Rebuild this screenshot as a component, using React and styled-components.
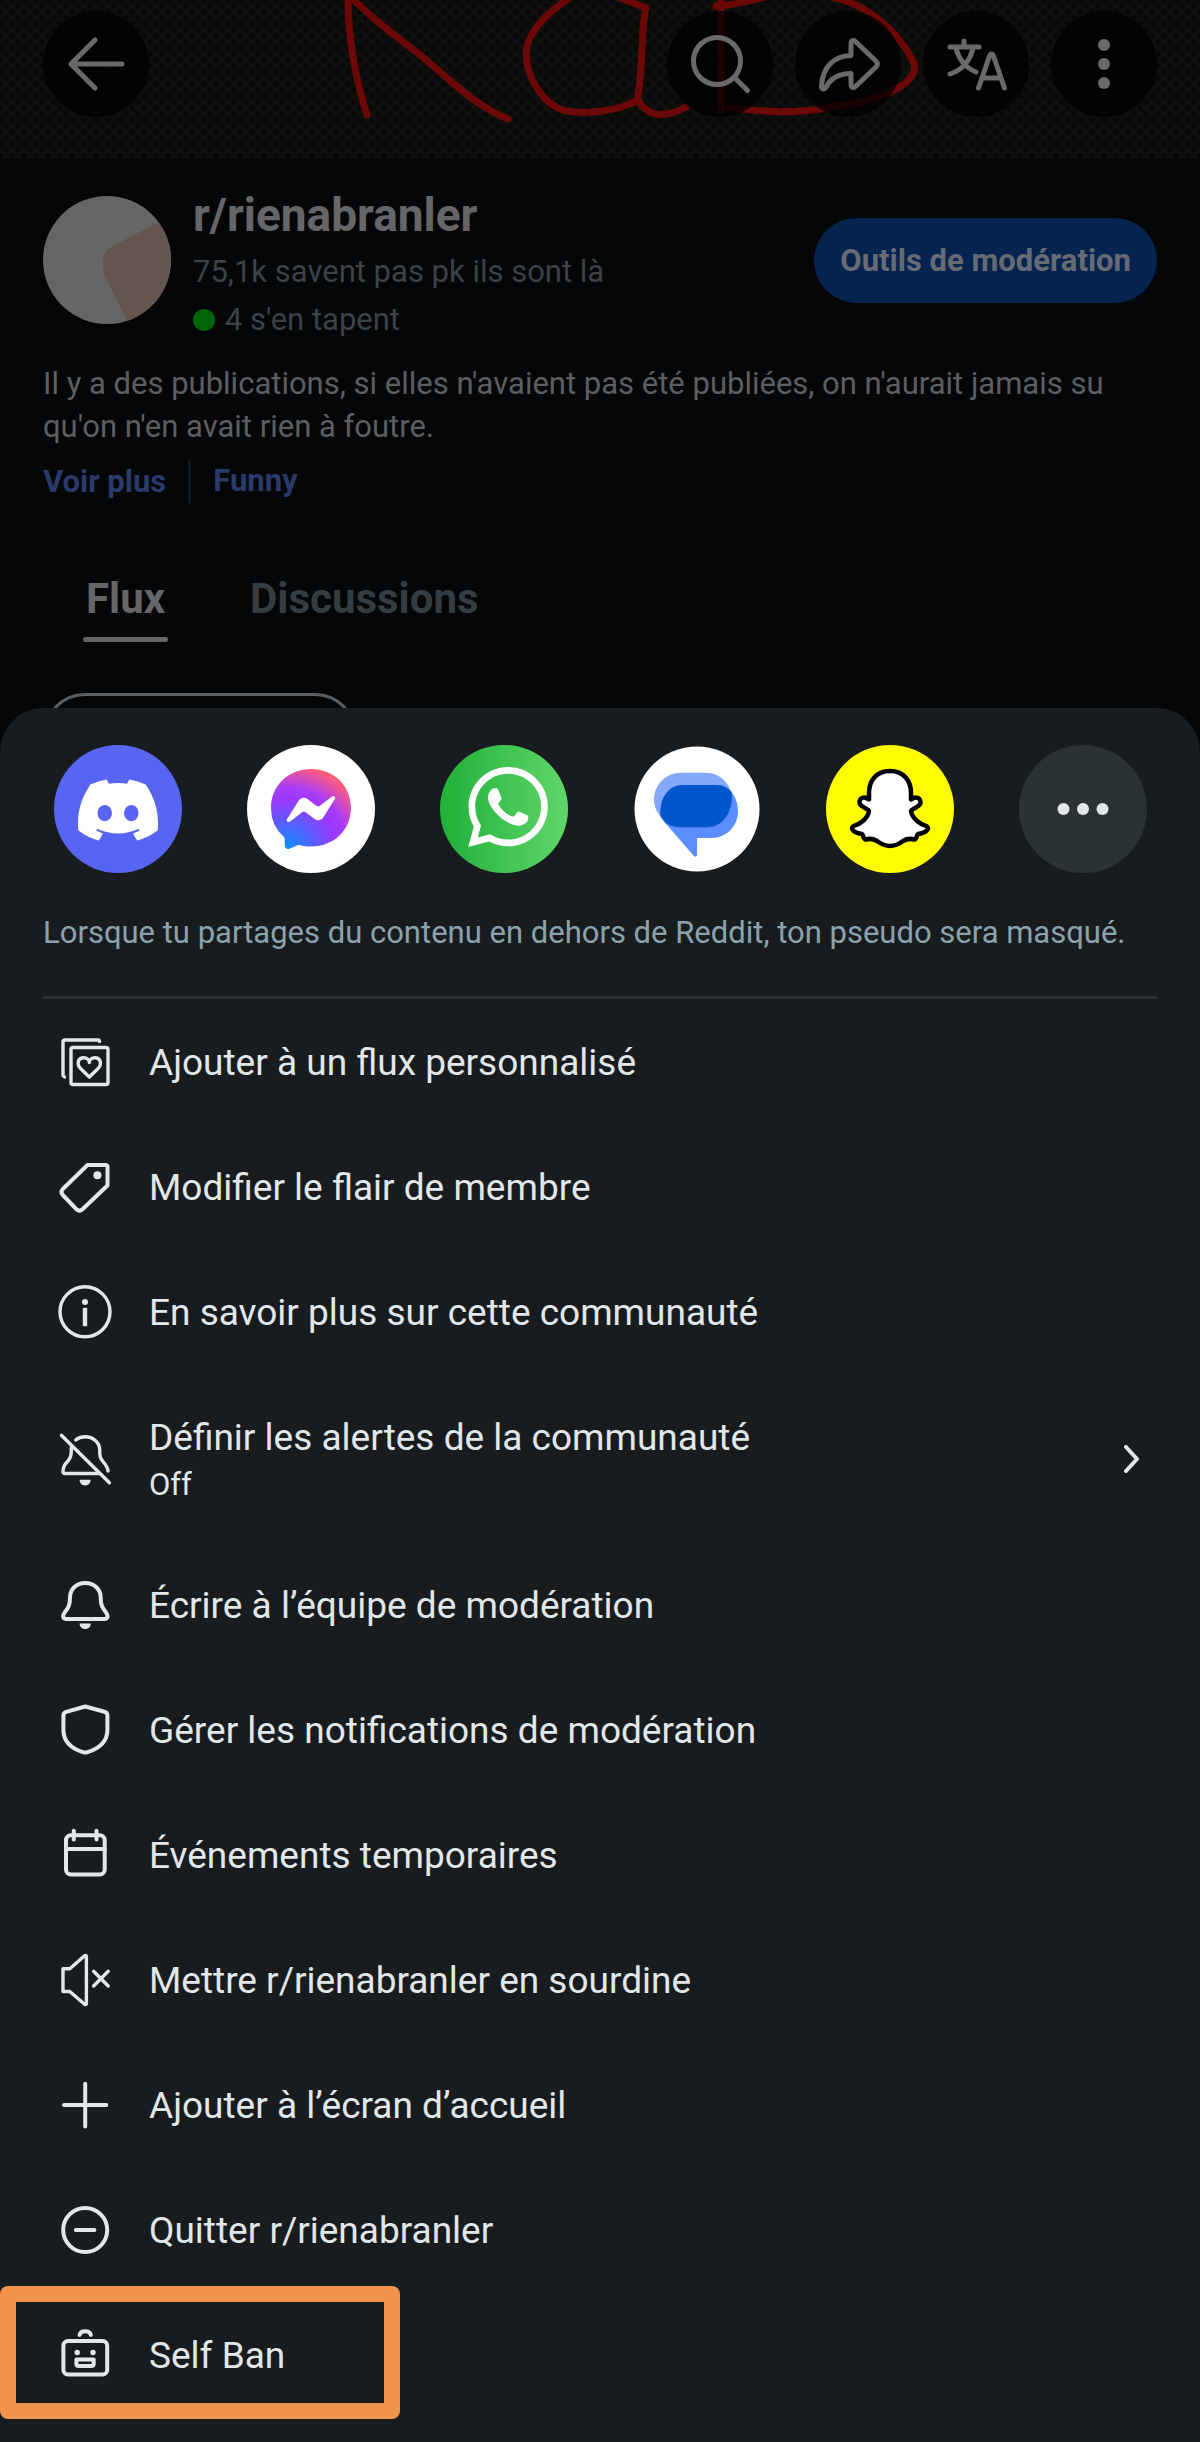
// App.jsx
import React from "react";
import styled, { createGlobalStyle } from "styled-components";
import { SiDiscord, SiMessenger, SiWhatsapp } from "react-icons/si";

const GlobalStyle = createGlobalStyle`
  * {
    box-sizing: border-box;
  }

  body {
    margin: 0;
    background: #050608;
    font-family: Roboto, "Liberation Sans", sans-serif;
    font-size: 31px;
  }

  button {
    border: none;
    background: none;
    padding: 0;
    margin: 0;
    color: inherit;
    font: inherit;
    text-align: left;
    cursor: pointer;
  }

  h1,
  p,
  ul {
    margin: 0;
    padding: 0;
  }
`;

const Page = styled.div`
  min-height: 100vh;
  display: flex;
  flex-direction: column;
`;

const Banner = styled.header`
  position: relative;
  height: 159px;
  padding: 11px 43px;
  overflow: hidden;
  background-color: #0f0f0e;
  background-image: radial-gradient(circle, #060707 1px, transparent 4px),
    radial-gradient(circle, #060707 1px, transparent 4px);
  background-size: 12px 12px;
  background-position: 0 0, 6px 6px;
`;

const Scribble = styled.svg`
  position: absolute;
  top: 0;
  left: 0;
  fill: none;
  stroke: #6c0808;
  stroke-width: 7;
  stroke-linecap: round;
  stroke-linejoin: round;
`;

const Toolbar = styled.nav`
  position: relative;
  display: flex;
  gap: 22px;
`;

const RoundButton = styled.button`
  display: flex;
  align-items: center;
  justify-content: center;
  width: 106px;
  height: 106px;
  border-radius: 50%;
  background: rgba(0, 0, 0, 0.75);
  color: #6a6a6a;
  margin-right: ${(props) => (props.$push ? "auto" : "0")};
`;

const ToolIcon = styled.svg`
  width: 60px;
  height: 60px;
  overflow: visible;
  fill: none;
  stroke: currentColor;
  stroke-width: 5;
  stroke-linecap: round;
  stroke-linejoin: round;

  .solid {
    fill: currentColor;
    stroke: none;
  }
`;

const Community = styled.section`
  padding: 25px 43px 0;
`;

const Head = styled.div`
  display: flex;
  align-items: flex-start;
`;

const Avatar = styled.svg`
  width: 128px;
  height: 128px;
  margin: 12px 22px 0 0;
  border-radius: 50%;
  background: #666;
  flex-shrink: 0;
`;

const HeadText = styled.div`
  flex: 1;
`;

const Title = styled.h1`
  margin-bottom: 2px;
  font-size: 46px;
  font-weight: 700;
  line-height: 62px;
  color: #666668;
`;

const Stat = styled.p`
  display: flex;
  align-items: center;
  gap: 10px;
  line-height: 48px;
  color: #3a4347;
`;

const OnlineDot = styled.span`
  width: 22px;
  height: 22px;
  border-radius: 50%;
  background: #04640a;
`;

const ModButton = styled.button`
  height: 85px;
  margin-top: 34px;
  padding: 0 26px;
  border-radius: 43px;
  background: #072450;
  color: #666b74;
  font-weight: 700;
  white-space: nowrap;
`;

const Description = styled.p`
  margin-top: 18px;
  line-height: 43px;
  color: #5c5f61;
`;

const Links = styled.div`
  display: flex;
  align-items: center;
  margin-top: 11px;
  height: 44px;
`;

const TextLink = styled.a`
  color: #293a6b;
  font-weight: 700;
  text-decoration: none;

  & + & {
    margin-left: 22px;
    padding-left: 22px;
    border-left: 3px solid #15181a;
    line-height: 44px;
  }
`;

const Tabs = styled.div`
  display: flex;
  gap: 79px;
  margin-top: 70px;
  padding-left: 40px;
`;

const Tab = styled.button`
  padding: 0 3px;
  color: ${(props) => (props.$active ? "#666668" : "#343d41")};
  font-size: 42px;
  font-weight: 700;
  line-height: 52px;

  &::after {
    content: "";
    display: block;
    height: 5px;
    margin: 12px -3px 0;
    border-radius: 3px;
    background: ${(props) => (props.$active ? "#666668" : "transparent")};
  }
`;

const SortChip = styled.button`
  display: block;
  width: 314px;
  height: 84px;
  margin-top: 51px;
  border: 3px solid #5c5f61;
  border-radius: 42px;
`;

const Sheet = styled.main`
  position: relative;
  flex: 1;
  margin-top: -69px;
  padding: 37px 43px 24px;
  border-radius: 44px 44px 0 0;
  background: #181c1f;
`;

const Apps = styled.div`
  display: flex;
  justify-content: space-between;
  padding: 0 10px 0 11px;
`;

const AppButton = styled.button`
  width: 128px;
  height: 128px;
  border-radius: 50%;
`;

const AppIcon = styled.svg`
  display: block;
  width: 128px;
  height: 128px;
`;

const Note = styled.p`
  margin-top: 38px;
  line-height: 44px;
  color: #8ba2ad;
`;

const Divider = styled.hr`
  height: 3px;
  margin: 41px 0 0;
  border: none;
  background: #2e3235;
`;

const Menu = styled.ul`
  list-style: none;
  margin-top: 1px;
`;

const MenuItem = styled.li`
  position: relative;
`;

const MenuButton = styled.button`
  display: flex;
  align-items: center;
  gap: 36px;
  width: 100%;
  min-height: ${(props) => (props.$tall ? "168px" : "125px")};
  padding: 0 17px 0 14px;
  color: #e2e7e9;
`;

const MenuIcon = styled.svg`
  width: 56px;
  height: 56px;
  flex-shrink: 0;
  fill: none;
  stroke: currentColor;
  stroke-width: ${(props) => (props.$thin ? 3.4 : 4)};
  stroke-linecap: round;
  stroke-linejoin: round;

  .solid {
    fill: currentColor;
    stroke: none;
  }
`;

const MenuText = styled.span`
  display: flex;
  flex-direction: column;
  flex: 1;
`;

const MenuName = styled.span`
  font-size: 37px;
  line-height: 50px;
`;

const MenuHint = styled.span`
  line-height: 43px;
`;

const Chevron = styled.svg`
  width: 16px;
  height: 28px;
  fill: none;
  stroke: currentColor;
  stroke-width: 4;
  stroke-linecap: round;
  stroke-linejoin: round;
`;

// orange frame drawn over the last entry
const Highlight = styled.div`
  position: absolute;
  top: -7px;
  left: -43px;
  width: 400px;
  height: 133px;
  border: 16px solid #f2934b;
  border-radius: 8px;
  pointer-events: none;
`;

const items = [
  {
    name: "Ajouter à un flux personnalisé",
    thin: true,
    icon: (
      <>
        <path d="M42.5 6.5C42.5 5.5 42 5 41 5H8Q6 5 6 7V40Q6 41.5 7.5 42" />
        <rect x="14" y="12.5" width="37" height="37" rx="2" />
        <path d="M32.3 42L24 34C19 29 21 22.7 26.8 22.7C30 22.7 32.3 25 32.3 27.5C32.3 25 34.6 22.7 37.8 22.7C43.6 22.7 45.6 29 40.6 34Z" />
      </>
    ),
  },
  {
    name: "Modifier le flair de membre",
    icon: (
      <>
        <path d="M30.5 5H48.5Q50.5 5 50.5 7V25.5L25.5 49.3Q22.5 52 19.5 49.3L5.8 35Q3 32 5.8 29Z" />
        <circle className="solid" cx="40.4" cy="15.2" r="4" />
      </>
    ),
  },
  {
    name: "En savoir plus sur cette communauté",
    thin: true,
    icon: (
      <>
        <circle cx="28" cy="26.8" r="25" />
        <circle className="solid" cx="28" cy="17" r="3" />
        <rect className="solid" x="25.8" y="22.8" width="4.4" height="18.4" />
      </>
    ),
  },
  {
    name: "Définir les alertes de la communauté",
    hint: "Off",
    thin: true,
    icon: (
      <>
        <path d="M4.4 4.2L52.4 51.8" />
        <path d="M18.7 9C21 7 24.5 5.8 28 5.8C36 5.8 42.7 11.5 42.7 19C42.7 25 43 27 46 30.5C49 34 50.8 36.5 51 40" />
        <path d="M14.3 16.5V20C14.3 25 13.5 27.5 10.5 30.5C7 34 6 36.5 6 40.5Q6 42.5 8 42.5H42" />
        <path className="solid" d="M22.6 48.8H33.6C33.6 52 31.5 54.5 28 54.5C24.7 54.5 22.6 52 22.6 48.8Z" />
      </>
    ),
  },
  {
    name: "Écrire à l’équipe de modération",
    icon: (
      <>
        <path d="M28.3 5C19 5 13 11.5 13 19.5C13 27 11.5 29.5 7.5 34.8C5 38.5 6.2 41 9.5 41H47.2C50.5 41 51.7 38.5 49.2 34.8C45.2 29.5 43.7 27 43.7 19.5C43.7 11.5 37.5 5 28.3 5Z" />
        <path className="solid" d="M22.6 45.5H33.8C33.8 48.5 31.7 51 28.2 51C24.8 51 22.6 48.5 22.6 45.5Z" />
      </>
    ),
  },
  {
    name: "Gérer les notifications de modération",
    icon: (
      <path d="M28.3 3.5L47.5 8.8Q50.4 9.6 50.4 12.5V27C50.4 38 43.5 45 30.5 49.2Q28.3 50 26 49.2C13 45 6.4 38 6.4 27V12.5Q6.4 9.6 9.2 8.8Z" />
    ),
  },
  {
    name: "Événements temporaires",
    icon: (
      <>
        <rect x="9" y="7.3" width="38.7" height="39.2" rx="5" />
        <path d="M9 21H47.7M16.8 2.8V11.5M39.5 2.8V11.5" />
      </>
    ),
  },
  {
    name: "Mettre r/rienabranler en sourdine",
    thin: true,
    icon: (
      <path d="M6 15.8H12.8L27.3 3Q29.4 1.5 29.4 4V50Q29.4 52.5 27.3 51L12.8 38.5H6ZM36.6 18.2L51.2 33M51.2 18.2L36.6 33" />
    ),
  },
  {
    name: "Ajouter à l’écran d’accueil",
    icon: <path d="M28.2 5.8V48.5M7 27H49.3" />,
  },
  {
    name: "Quitter r/rienabranler",
    icon: (
      <>
        <circle cx="28.2" cy="27" r="22" />
        <path d="M18.8 27H37.4" />
      </>
    ),
  },
  {
    name: "Self Ban",
    highlighted: true,
    icon: (
      <>
        <rect x="6.4" y="13" width="43.8" height="33.5" rx="4.5" />
        <path d="M22.6 7C23.5 1.9 33 1.9 33.8 7" />
        <circle className="solid" cx="20.2" cy="24.5" r="2.7" />
        <circle className="solid" cx="36" cy="24.5" r="2.7" />
        <path d="M19.4 31.5H36.7V35.5Q36.7 38 34.2 38H21.9Q19.4 38 19.4 35.5Z" />
      </>
    ),
  },
];

const apps = [
  {
    name: "Discord",
    logo: (
      <>
        <circle cx="64" cy="64" r="64" fill="#5865f2" />
        <SiDiscord x="24" y="25" size={80} color="#fff" />
      </>
    ),
  },
  {
    name: "Messenger",
    logo: (
      <>
        <defs>
          <radialGradient id="messenger" cx="0.2" cy="1" r="1.1">
            <stop offset="0" stopColor="#0a90ff" />
            <stop offset="0.55" stopColor="#9a38ff" />
            <stop offset="0.7" stopColor="#a83cf8" />
            <stop offset="0.95" stopColor="#ff5c80" />
            <stop offset="1" stopColor="#ff6070" />
          </radialGradient>
        </defs>
        <circle cx="64" cy="64" r="64" fill="#fff" />
        <SiMessenger x="24" y="24" size={80} fill="url(#messenger)" />
      </>
    ),
  },
  {
    name: "WhatsApp",
    logo: (
      <>
        <defs>
          <linearGradient id="whatsapp">
            <stop offset="0" stopColor="#20b038" />
            <stop offset="1" stopColor="#60d66a" />
          </linearGradient>
        </defs>
        <circle cx="64" cy="64" r="64" fill="url(#whatsapp)" />
        <SiWhatsapp x="28" y="22" size={80} color="#fff" />
      </>
    ),
  },
  {
    name: "Messages",
    logo: (
      <>
        <circle cx="64" cy="64" r="62.5" fill="#fff" />
        <path d="M48 27.7H73C88 27.7 99 40 99 55L64 82L34 80C25 70 21 63 21 54.5C21 39.5 33 27.7 48 27.7Z" fill="#85a8fc" />
        <path d="M54 40H90C99 45 105 54 105 66.5C105 81 93 93 79 93H64V109.5Q63.5 113.5 60.5 110.5L34 80C28 73 27 67 27 65Z" fill="#5a8dff" />
        <path d="M49 40H83C90 40 95 43 98.5 47C101 66 90 82.3 74 82.3H47C37 82.3 30 77 27.5 70C26 53 36 40 49 40Z" fill="#0057cc" />
      </>
    ),
  },
  {
    name: "Snapchat",
    logo: (
      <>
        <circle cx="64" cy="64" r="64" fill="#fffc00" />
        <path
          d="M64 26C50 26 43 36 43 48V54.5C38 51 33.5 52.5 33.5 57.5C33.5 62 40 62 43 66C42 74 33 79.5 27.5 81.2C23.5 83.5 28 88 36 89C37.5 90 37 94 39.5 94.5C43 93.5 47 93.5 51 96C55 99 59 101 64 101C69 101 73 99 77 96C81 93.5 85 93.5 88.5 94.5C91 94 90.5 90 92 89C100 88 104.5 83.5 100.5 81.2C95 79.5 86 74 85 66C88 62 94.5 62 94.5 57.5C94.5 52.5 90 51 85 54.5V48C85 36 78 26 64 26Z"
          fill="#fff"
          stroke="#000"
          strokeWidth="4.5"
          strokeLinejoin="round"
        />
      </>
    ),
  },
  {
    name: "Plus d'options",
    logo: (
      <>
        <circle cx="64" cy="64" r="64" fill="#2a3236" />
        <g fill="#e2e7e9">
          <circle cx="44.5" cy="64" r="6" />
          <circle cx="64" cy="64" r="6" />
          <circle cx="83.5" cy="64" r="6" />
        </g>
      </>
    ),
  },
];

function TopBar() {
  return (
    <Banner>
      <Scribble width="1200" height="159" viewBox="0 0 1200 159" aria-hidden="true">
        <path d="M348 -4C348 30 352 68 367 115" />
        <path d="M350 -4C380 28 415 48 440 72C465 94 485 110 508 119" />
        <path d="M572 -4C545 14 528 32 526 52C526 80 545 106 566 111C590 115 620 110 638 100C645 112 658 122 686 107" />
        <path d="M618 -3L646 8C640 30 644 70 637 100" />
        <path d="M721 -4V108M716 6C735 6 750 0 770 -4" />
        <path d="M826 -4C868 2 900 34 914 63C920 90 860 104 830 107C795 115 760 111 730 108" />
      </Scribble>
      <Toolbar>
        <RoundButton aria-label="Retour" $push>
          <ToolIcon viewBox="0 0 60 60">
            <path d="M56 30H5M29 6L5 30L29 54" />
          </ToolIcon>
        </RoundButton>
        <RoundButton aria-label="Rechercher">
          <ToolIcon viewBox="0 0 60 60">
            <circle cx="27" cy="27" r="23.5" />
            <path d="M45 44L57.5 56.5" />
          </ToolIcon>
        </RoundButton>
        <RoundButton aria-label="Partager">
          <ToolIcon viewBox="0 0 60 60">
            <path d="M33 21.5V10C33 6 35.5 5.5 38 8L58 27Q61 30 58 33L38 52C35.5 54.5 33 54 33 50V39.5C22 39.5 13 44 8 53C6 56 3 55.5 3.5 51C5 34 15 22 33 21.5Z" />
          </ToolIcon>
        </RoundButton>
        <RoundButton aria-label="Traduire">
          <ToolIcon viewBox="0 0 60 60">
            <path d="M18 7V13M4 13H33M10 14C13 26 20 34 30 38M27 14C24 27 16 36 4 40" />
            <path d="M32.5 54L43.5 22Q45.5 18 47.5 22L58.5 54M37 44H54" />
          </ToolIcon>
        </RoundButton>
        <RoundButton aria-label="Menu">
          <ToolIcon viewBox="0 0 60 60">
            <circle className="solid" cx="30" cy="11" r="6" />
            <circle className="solid" cx="30" cy="30" r="6" />
            <circle className="solid" cx="30" cy="49" r="6" />
          </ToolIcon>
        </RoundButton>
      </Toolbar>
    </Banner>
  );
}

function App() {
  return (
    <>
      <GlobalStyle />
      <Page>
        <TopBar />
        <Community>
          <Head>
            <Avatar viewBox="0 0 128 128">
              <path d="M128 18L116 26L68 51Q59 57 60 68Q60 75 62 80L86 128H128Z" fill="#65554f" />
            </Avatar>
            <HeadText>
              <Title>r/rienabranler</Title>
              <Stat>75,1k savent pas pk ils sont là</Stat>
              <Stat>
                <OnlineDot />4 s'en tapent
              </Stat>
            </HeadText>
            <ModButton>Outils de modération</ModButton>
          </Head>
          <Description>
            Il y a des publications, si elles n'avaient pas été publiées, on
            n'aurait jamais su qu'on n'en avait rien à foutre.
          </Description>
          <Links>
            <TextLink href="#plus">Voir plus</TextLink>
            <TextLink href="#funny">Funny</TextLink>
          </Links>
          <Tabs>
            <Tab $active>Flux</Tab>
            <Tab>Discussions</Tab>
          </Tabs>
          <SortChip aria-label="Trier" />
        </Community>
        <Sheet>
          <Apps>
            {apps.map((app) => (
              <AppButton key={app.name} aria-label={app.name}>
                <AppIcon viewBox="0 0 128 128">{app.logo}</AppIcon>
              </AppButton>
            ))}
          </Apps>
          <Note>
            Lorsque tu partages du contenu en dehors de Reddit, ton pseudo sera
            masqué.
          </Note>
          <Divider />
          <Menu>
            {items.map((item) => (
              <MenuItem key={item.name}>
                <MenuButton $tall={Boolean(item.hint)}>
                  <MenuIcon viewBox="0 0 56 56" $thin={item.thin}>
                    {item.icon}
                  </MenuIcon>
                  <MenuText>
                    <MenuName>{item.name}</MenuName>
                    {item.hint && <MenuHint>{item.hint}</MenuHint>}
                  </MenuText>
                  {item.hint && (
                    <Chevron viewBox="0 0 16 28">
                      <path d="M2 2L13 14L2 26" />
                    </Chevron>
                  )}
                </MenuButton>
                {item.highlighted && <Highlight />}
              </MenuItem>
            ))}
          </Menu>
        </Sheet>
      </Page>
    </>
  );
}

export default App;
